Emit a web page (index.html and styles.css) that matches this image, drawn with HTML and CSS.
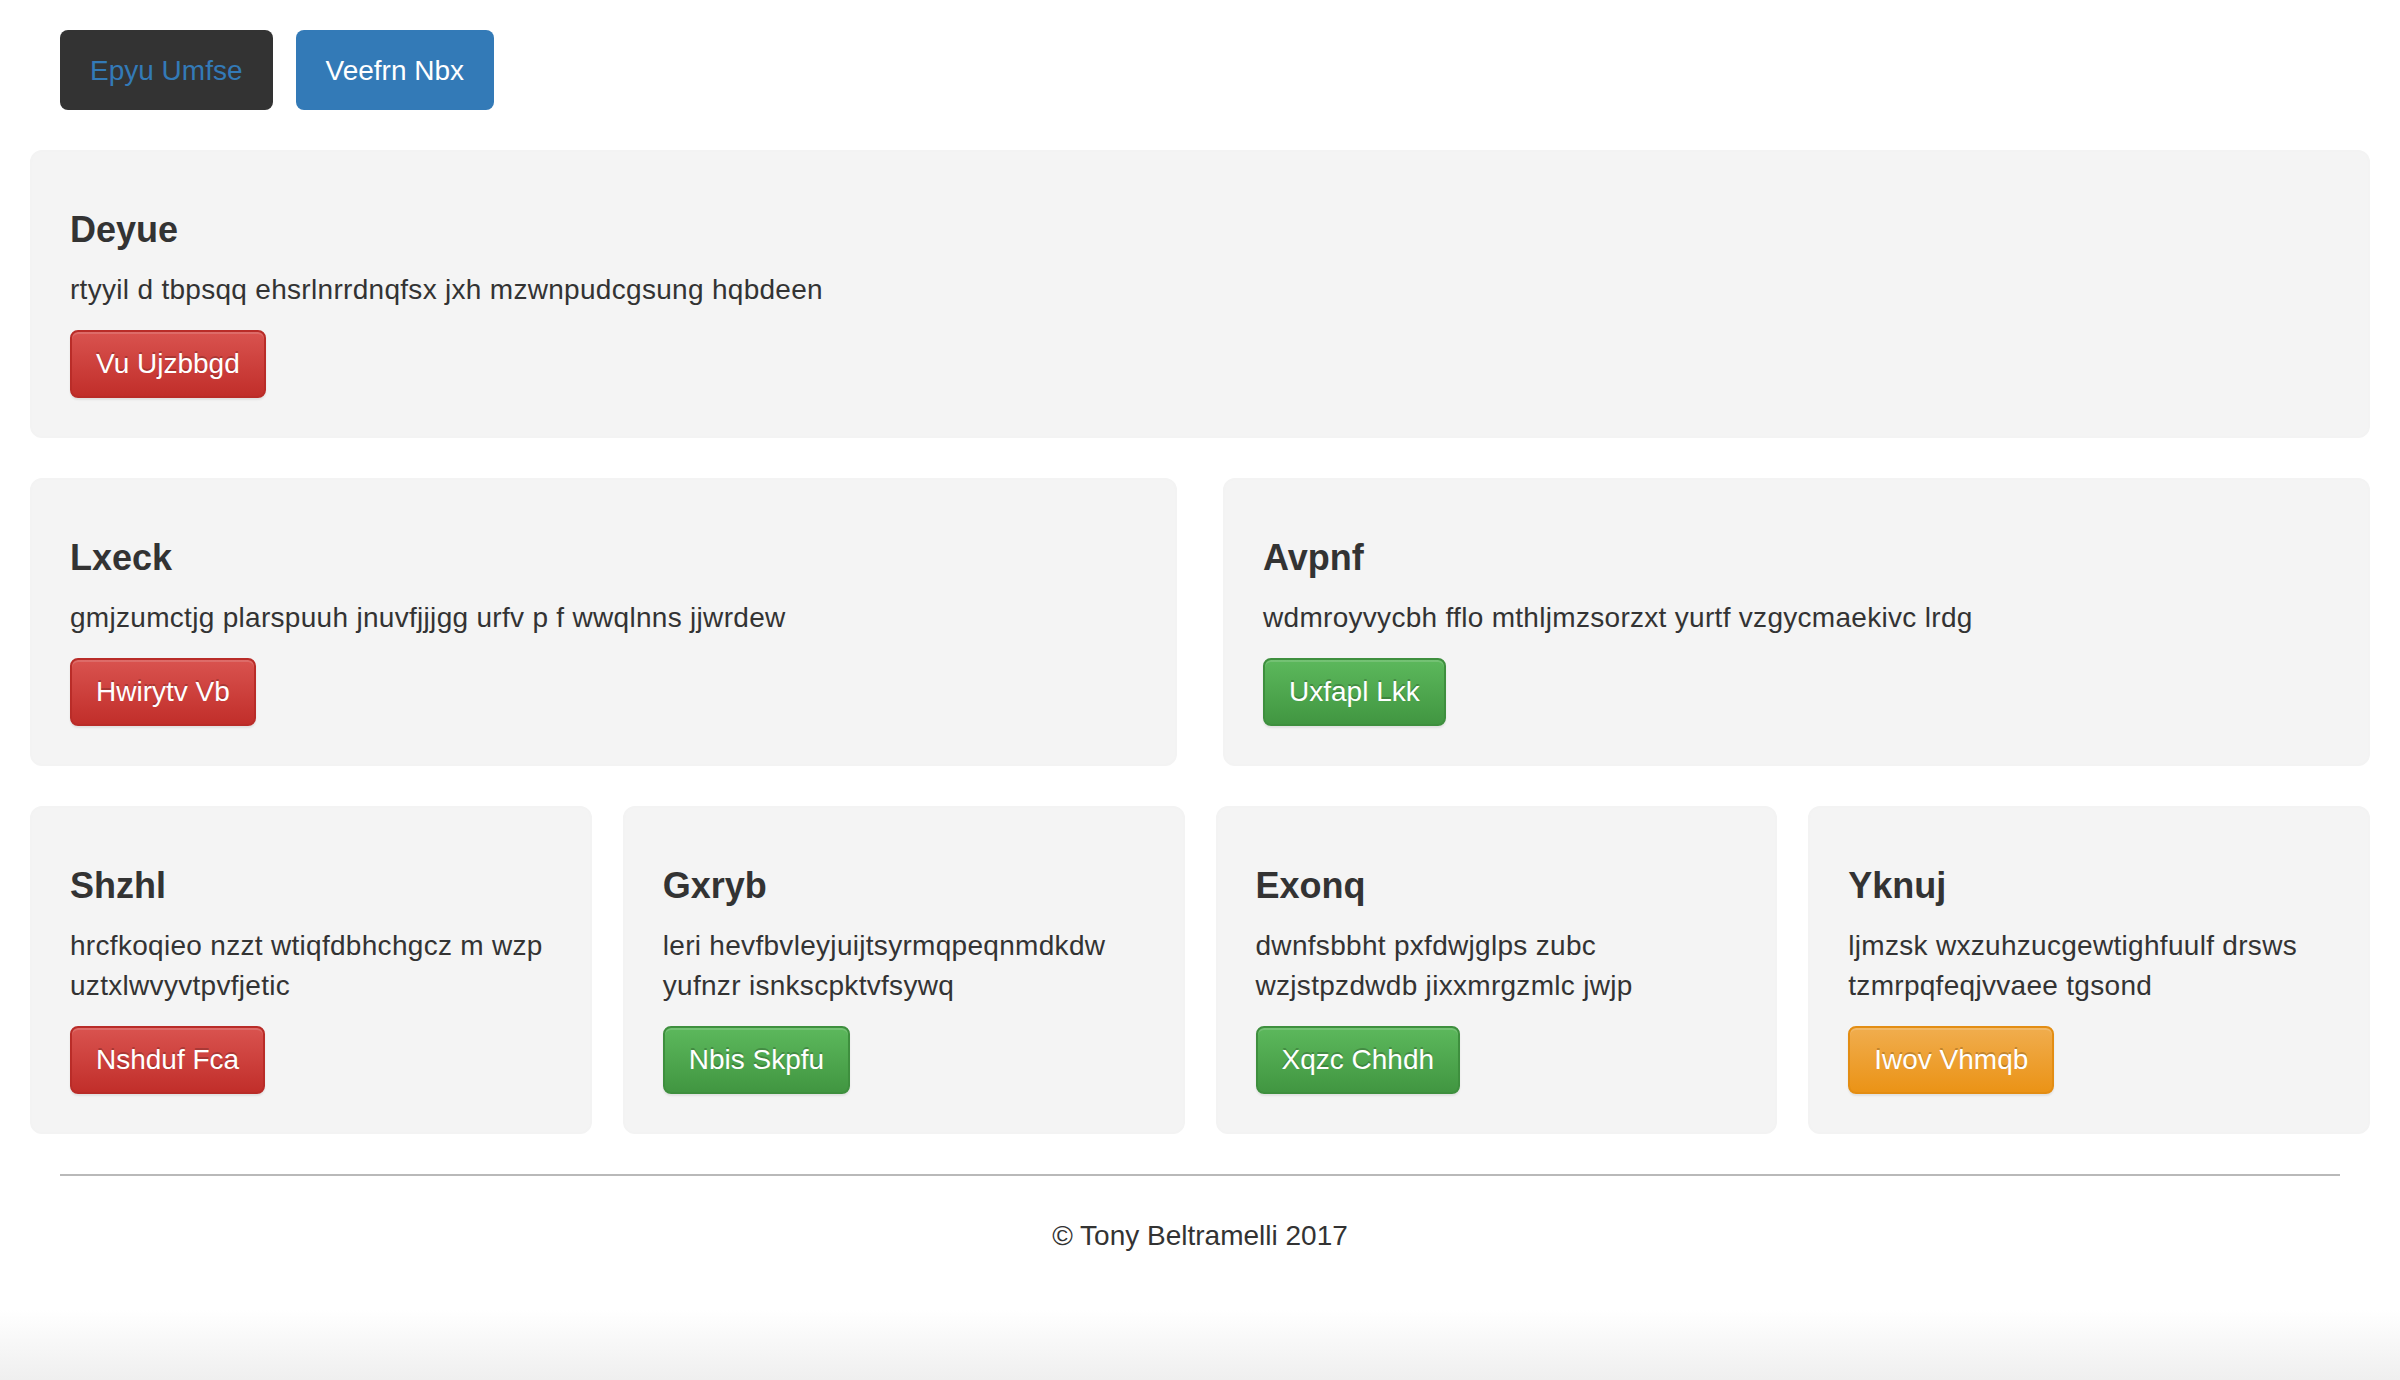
FILE: index.html
```html
<!DOCTYPE html>
<html lang="en">
<head>
<meta charset="utf-8">
<title>Page</title>
<link rel="stylesheet" href="styles.css">
</head>
<body>
<div class="container">
  <div class="header">
    <a class="nav-btn nav-dark">Epyu Umfse</a>
    <a class="nav-btn nav-primary">Veefrn Nbx</a>
  </div>

  <div class="row cols-1">
    <div class="well">
      <h4>Deyue</h4>
      <p>rtyyil d tbpsqq ehsrlnrrdnqfsx jxh mzwnpudcgsung hqbdeen</p>
      <a class="btn btn-danger">Vu Ujzbbgd</a>
    </div>
  </div>

  <div class="row cols-2">
    <div class="well">
      <h4>Lxeck</h4>
      <p>gmjzumctjg plarspuuh jnuvfjjjgg urfv p f wwqlnns jjwrdew</p>
      <a class="btn btn-danger">Hwirytv Vb</a>
    </div>
    <div class="well">
      <h4>Avpnf</h4>
      <p>wdmroyvycbh fflo mthljmzsorzxt yurtf vzgycmaekivc lrdg</p>
      <a class="btn btn-success">Uxfapl Lkk</a>
    </div>
  </div>

  <div class="row cols-4">
    <div class="well">
      <h4>Shzhl</h4>
      <p>hrcfkoqieo nzzt wtiqfdbhchgcz m wzp uztxlwvyvtpvfjetic</p>
      <a class="btn btn-danger">Nshduf Fca</a>
    </div>
    <div class="well">
      <h4>Gxryb</h4>
      <p>leri hevfbvleyjuijtsyrmqpeqnmdkdw yufnzr isnkscpktvfsywq</p>
      <a class="btn btn-success">Nbis Skpfu</a>
    </div>
    <div class="well">
      <h4>Exonq</h4>
      <p>dwnfsbbht pxfdwjglps zubc wzjstpzdwdb jixxmrgzmlc jwjp</p>
      <a class="btn btn-success">Xqzc Chhdh</a>
    </div>
    <div class="well">
      <h4>Yknuj</h4>
      <p>ljmzsk wxzuhzucgewtighfuulf drsws tzmrpqfeqjvvaee tgsond</p>
      <a class="btn btn-warning">Iwov Vhmqb</a>
    </div>
  </div>

  <footer class="footer">
    <hr class="rule">
    <p class="copy">© Tony Beltramelli 2017</p>
  </footer>
</div>
</body>
</html>
```

FILE: styles.css
```css
html {
  min-height: 100%;
  background: linear-gradient(to bottom, #ffffff 0, #ffffff calc(100% - 70px), #efefef 100%);
}

body {
  margin: 0;
  min-height: 1380px;
  font-family: "Liberation Sans", Arial, Helvetica, sans-serif;
  font-size: 28px;
  line-height: 40px;
  color: #333333;
}

.container {
  padding: 0 30px;
}

.header {
  display: flex;
  gap: 23px;
  padding: 30px 30px 0;
  margin-bottom: 40px;
}

.nav-btn {
  display: inline-block;
  padding: 21px 30px 19px;
  font-size: 28px;
  line-height: 40px;
  border-radius: 8px;
  cursor: pointer;
}

.nav-dark {
  background: #333333;
  color: #337ab7;
}

.nav-primary {
  background: #337ab7;
  color: #ffffff;
}

.row {
  display: grid;
  margin-bottom: 40px;
}

.cols-1 { grid-template-columns: 1fr; }
.cols-2 { grid-template-columns: 1fr 1fr; column-gap: 46px; }
.cols-4 { grid-template-columns: repeat(4, 1fr); column-gap: 31px; }

.well {
  background: #f4f4f4;
  border: 2px solid #f3f3f3;
  border-radius: 12px;
  padding: 38px;
  min-width: 0;
}

.well h4 {
  margin: 20px 0 20px;
  font-size: 36px;
  line-height: 40px;
  font-weight: 700;
  color: #333333;
}

.well p {
  margin: 0 0 20px;
  letter-spacing: 0.3px;
}

.btn {
  display: inline-block;
  padding: 12px 24px;
  font-size: 28px;
  line-height: 40px;
  border: 2px solid transparent;
  border-radius: 8px;
  color: #ffffff;
  text-shadow: 0 -2px 0 rgba(0, 0, 0, 0.2);
  box-shadow: inset 0 2px 0 rgba(255, 255, 255, 0.15), 0 2px 2px rgba(0, 0, 0, 0.075);
  cursor: pointer;
}

.btn-danger {
  background: linear-gradient(to bottom, #d9534f 0%, #c12e2a 100%);
  border-color: #b92c28;
}

.btn-success {
  background: linear-gradient(to bottom, #5cb85c 0%, #419641 100%);
  border-color: #3e8f3e;
}

.btn-warning {
  background: linear-gradient(to bottom, #f0ad4e 0%, #eb9316 100%);
  border-color: #e38d13;
}

.footer {
  padding: 0 30px;
}

.rule {
  margin: 0 0 40px;
  border: 0;
  border-top: 2px solid #b9b9b9;
  height: 0;
}

.copy {
  margin: 0;
  text-align: center;
}
```
